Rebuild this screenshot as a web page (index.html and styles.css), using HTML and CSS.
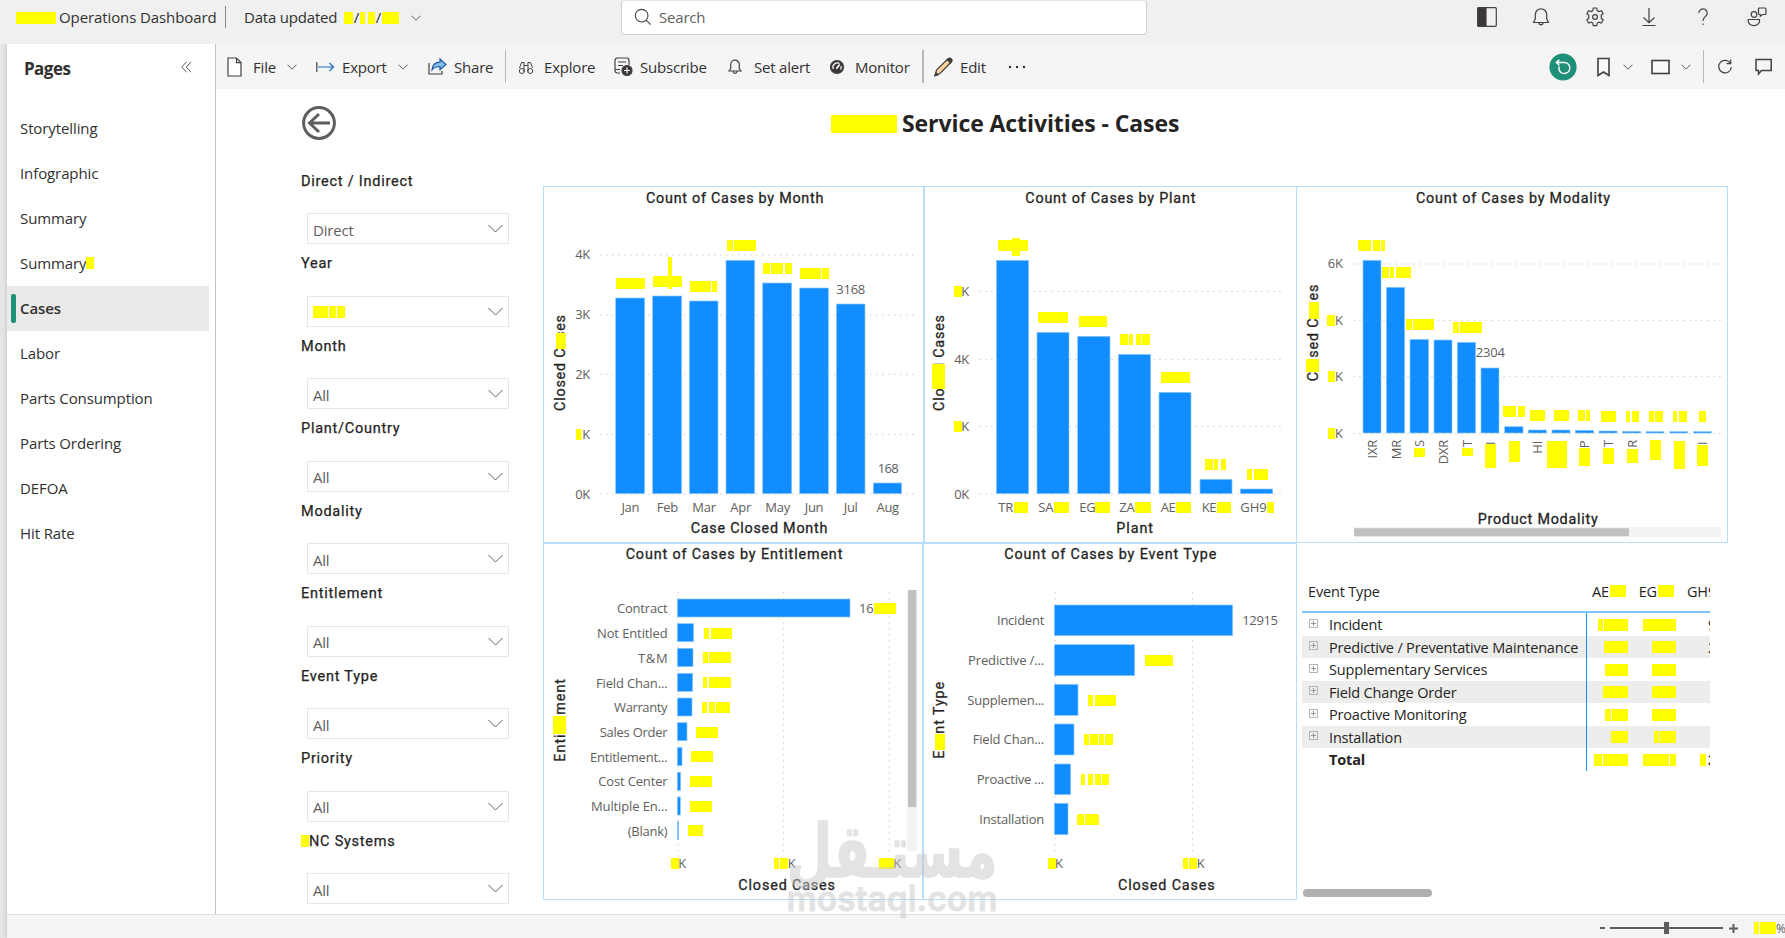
FILE: index.html
```html
<!DOCTYPE html>
<html lang="en">
<head>
    <meta charset="UTF-8">
    <title>Operations Dashboard</title>
    <link rel="stylesheet" href="styles.css">
</head>
<body>
    <header class="topbar">
        <div class="brand"><i class="mark m40"></i><span>Operations Dashboard</span></div>
        <div class="updated">
            <span class="updated-text">Data updated</span>
            <i class="mark m9"></i><span class="slash">/</span><i class="mark m5"></i><i class="mark m7"></i><span class="slash">/</span><i class="mark m17"></i>
            <svg class="chev" viewBox="0 0 10 6"><path d="M.5.7 5 5.2 9.5.7"/></svg>
        </div>
        <div class="search">
            <svg class="icon" viewBox="0 0 20 20"><circle cx="8.5" cy="8.5" r="7"/><path d="M13.5 13.5 18.5 18.5"/></svg>
            <span>Search</span>
        </div>
        <div class="top-icons">
            <svg class="icon" viewBox="0 0 20 20"><rect x=".7" y=".7" width="18.6" height="18.6" rx="1"/><path class="solid" d="M1 1h8v18H1z"/></svg>
            <svg class="icon" viewBox="0 0 20 20"><path d="M2.500 15.500h15L15.700 12V7.500a5.700 5.700 0 0 0-11.400 0V12zM8 15.800a2 2 0 0 0 4 0"/></svg>
            <svg class="icon" viewBox="0 0 20 20"><circle cx="10" cy="10" r="2.400"/><path d="M8.300 1h3.400l.5 2.600 1.700 1 2.500-.9 1.800 3-2 1.700v2.900l2 1.700-1.800 3-2.500-.9-1.700 1-.5 2.600H8.300l-.5-2.600-1.700-1-2.500.9-1.800-3 2-1.700V8.400l-2-1.700 1.800-3 2.500.9 1.700-1z"/></svg>
            <svg class="icon" viewBox="0 0 20 20"><path d="M10 1v14.500M4.500 10.500 10 15.700l5.500-5.200M3.500 18.500h13"/></svg>
            <svg class="icon" viewBox="0 0 20 20"><path d="M5.800 6a4.200 4.200 0 1 1 6.600 3.500C10.700 10.700 10 11.600 10 14M10 16.500v1.500"/></svg>
            <svg class="icon" viewBox="0 0 20 20"><circle cx="7" cy="7.500" r="2.800"/><path d="M1.200 12.500h11.300v1.500a5.600 4.500 0 0 1-11.300 0zM11.500 1h6.500q1 0 1 1v4.500q0 1-1 1h-2.500l-2.200 1.800V7.500h-.8q-1 0-1-1V2q0-1 1-1z"/></svg>
        </div>
    </header>

    <div class="shell">
        <aside class="pages">
            <div class="pages-head"><h2>Pages</h2><svg class="collapse" viewBox="0 0 11 12"><path d="M5.500.8.800 6l4.700 5.200M10 .8 5.300 6l4.700 5.200"/></svg></div>
            <ul>
                <li>Storytelling</li>
                <li>Infographic</li>
                <li>Summary</li>
                <li>Summary<i class="mark m8"></i></li>
                <li class="active"><span>Cases</span></li>
                <li>Labor</li>
                <li>Parts Consumption</li>
                <li>Parts Ordering</li>
                <li>DEFOA</li>
                <li>Hit Rate</li>
            </ul>
        </aside>

        <div class="content">
            <nav class="toolbar">
                <div class="tool"><svg class="icon" viewBox="0 0 20 20"><path fill="#fff" d="M1 1h8.500L14 5.600V19H1zM9.500 1v4.600H14"/></svg><span>File</span><svg class="chev" viewBox="0 0 10 6"><path d="M.5.7 5 5.200 9.500.7"/></svg></div>
                <div class="tool"><svg class="icon" viewBox="0 0 20 20"><path d="M.8 5v10"/><path class="blue" d="M2 10h15.500M13.500 6l4 4-4 4"/></svg><span>Export</span><svg class="chev" viewBox="0 0 10 6"><path d="M.5.7 5 5.200 9.500.7"/></svg></div>
                <div class="tool"><svg class="icon" viewBox="0 0 20 20"><path d="M1 6v11h13v-3"/><path fill="#83beec" stroke="#1e5a9c" d="M4 13C4.300 8 7 5.300 12 5.200V2l6 5.500-6 5.200V9.500C8.500 9.500 6 10.500 4 13z"/></svg><span>Share</span></div>
                <i class="rule"></i>
                <div class="tool"><svg class="icon thin" viewBox="0 0 20 20"><path d="M1.500 11 3.500 5.500h2.500V15M14.500 11 12.500 5.500H10V15M6 8.500h4"/><circle cx="3.800" cy="14" r="2.500"/><circle cx="12.200" cy="14" r="2.500"/></svg><span>Explore</span></div>
                <div class="tool"><svg class="icon" viewBox="0 0 20 20"><path d="M6 16H3.500Q1 16 1 13.500V3.500Q1 1 3.500 1h9Q15 1 15 3.500V8M4 5h8M4 8.500h5M1 12.500h5"/><circle class="solid" cx="13" cy="13.500" r="5"/><path stroke="#fff" d="M13 10.500v6M10 13.500h6"/></svg><span>Subscribe</span></div>
                <div class="tool"><svg class="icon" viewBox="0 0 20 20"><path d="M1 14h12l-1.700-2.500V7.500a4.300 4.300 0 0 0-8.600 0v4zM5.200 14.500a1.800 1.800 0 0 0 3.600 0"/></svg><span>Set alert</span></div>
                <div class="tool"><svg class="icon" viewBox="0 0 20 20"><circle class="solid" cx="8" cy="10" r="6.500"/><path stroke="#fff" d="M4.300 12A4.300 4.300 0 0 1 10.500 6.600M12 9a4.300 4.300 0 0 1-.5 3.500"/><path stroke="#fff" stroke-width="1.800" d="M7.300 11.700 10.700 7.500"/></svg><span>Monitor</span></div>
                <i class="rule thick"></i>
                <div class="tool"><svg class="icon" viewBox="0 0 20 20"><path fill="#ffd59b" d="M1 18.500 2.500 13 14 1.800q1.500-1 3 .2 1.300 1.500.2 3L6 16.500z"/><path class="solid" d="m13.200 2.600 3.300 3.400L18 4q.3-2-2-2.800-1.200-.2-2 .8zM1 18.800l1-3 2.200 2z"/></svg><span>Edit</span></div>
                <svg class="icon" viewBox="0 0 20 20"><g class="dots"><circle cx="2" cy="10" r="1.200"/><circle cx="9" cy="10" r="1.200"/><circle cx="16" cy="10" r="1.200"/></g></svg>
                <i></i>
                <svg class="reset" viewBox="0 0 28 28"><circle cx="14" cy="14" r="13.600"/><path d="M7.500 9.500h8a5.500 5.500 0 1 1-5.300 7.500q-.5-1.500 0-3.500M10.300 6.700l-2.900 2.800 2.900 2.900"/></svg>
                <svg class="icon" viewBox="0 0 20 20"><path stroke-width="1.600" fill="#fafafa" d="M2 1.500h11v17L7.500 15 2 18.500z"/></svg>
                <svg class="chev" viewBox="0 0 10 6"><path d="M.5.7 5 5.200 9.500.7"/></svg>
                <svg class="icon" viewBox="0 0 20 20"><rect x="1" y="3.500" width="17" height="13" stroke-width="1.600" fill="#fafafa"/></svg>
                <svg class="chev" viewBox="0 0 10 6"><path d="M.5.7 5 5.200 9.500.7"/></svg>
                <i class="rule"></i>
                <svg class="icon" viewBox="0 0 20 20"><path d="M13.500 6.500A6.300 6.300 0 1 0 14.300 10M13.700 2.500v4.200H9.500"/></svg>
                <svg class="icon" viewBox="0 0 20 20"><path stroke-width="1.500" d="M2 2.500h15.200v11H7.500L4.500 17v-3.500H2z"/></svg>
            </nav>

            <main class="report">
                <section class="filters">
                    <svg class="back" viewBox="0 0 34 34"><circle cx="17" cy="17" r="15.400"/><path d="M28 17H8M17 8l-9.500 9L17 26"/></svg>
                    <div class="filter"><h3>Direct / Indirect</h3><div class="select"><span>Direct</span><svg viewBox="0 0 15 9"><path d="M.5 1l7 7 7-7"/></svg></div></div>
                    <div class="filter"><h3>Year</h3><div class="select"><span class="marks"><i class="mark m15"></i><i class="mark m7"></i><i class="mark m8"></i></span><svg viewBox="0 0 15 9"><path d="M.5 1l7 7 7-7"/></svg></div></div>
                    <div class="filter"><h3>Month</h3><div class="select"><span>All</span><svg viewBox="0 0 15 9"><path d="M.5 1l7 7 7-7"/></svg></div></div>
                    <div class="filter"><h3>Plant/Country</h3><div class="select"><span>All</span><svg viewBox="0 0 15 9"><path d="M.5 1l7 7 7-7"/></svg></div></div>
                    <div class="filter"><h3>Modality</h3><div class="select"><span>All</span><svg viewBox="0 0 15 9"><path d="M.5 1l7 7 7-7"/></svg></div></div>
                    <div class="filter"><h3>Entitlement</h3><div class="select"><span>All</span><svg viewBox="0 0 15 9"><path d="M.5 1l7 7 7-7"/></svg></div></div>
                    <div class="filter"><h3>Event Type</h3><div class="select"><span>All</span><svg viewBox="0 0 15 9"><path d="M.5 1l7 7 7-7"/></svg></div></div>
                    <div class="filter"><h3>Priority</h3><div class="select"><span>All</span><svg viewBox="0 0 15 9"><path d="M.5 1l7 7 7-7"/></svg></div></div>
                    <div class="filter"><h3><i class="mark m8"></i>NC Systems</h3><div class="select"><span>All</span><svg viewBox="0 0 15 9"><path d="M.5 1l7 7 7-7"/></svg></div></div>
                </section>

                <section class="board">
                    <div class="title"><i class="mark"></i><h1>Service Activities - Cases</h1></div>

                    <!-- charts: 3 svg units to 1px -->
                    <div class="charts">
                        <div class="visual month">
                            <svg class="chart" viewBox="12 21 1137 1065">
                                <text class="head" x="584" y="68" textLength="532">Count of Cases by Month</text>
                                <path class="grid" d="M180 225H1132M180 405H1132M180 583H1132M180 763H1132M180 942H1132"/>
                                <g class="val end"><text x="150" y="237">4K</text><text x="150" y="417">3K</text><text x="150" y="597">2K</text><text x="150" y="777">K</text><text x="150" y="957">0K</text></g>
                                <g class="bar">
                                    <rect x="227" y="354" width="87" height="587"/><rect x="338" y="348" width="87" height="593"/>
                                    <rect x="448" y="363" width="86" height="578"/><rect x="558" y="241" width="86" height="700"/>
                                    <rect x="668" y="309" width="87" height="632"/><rect x="779" y="324" width="86" height="617"/>
                                    <rect x="889" y="372" width="86" height="569"/><rect x="1000" y="909" width="85" height="32"/>
                                </g>
                                <g class="val mid"><text x="932" y="343" textLength="86">3168</text><text x="1044" y="880" textLength="62">168</text>
                                    <text x="271" y="997">Jan</text><text x="382" y="997">Feb</text><text x="492" y="997">Mar</text><text x="602" y="997">Apr</text><text x="713" y="997">May</text><text x="822" y="997">Jun</text><text x="932" y="997">Jul</text><text x="1043" y="997">Aug</text></g>
                                <text class="head" x="657" y="1059" textLength="410">Case Closed Month</text>
                                <text class="head" transform="translate(75 549) rotate(-90)" textLength="288">Closed Cases</text>
                                <path class="hide" d="M48 459h29v48h-29zM108 747h16v33h-16zM228 294h87v33h-87zM339 288h45v-57h12v57h30v33h-30v6h-12v-6h-45zM450 303h63v33h-63zM516 303h15v33h-15zM561 180h18v33h-18zM582 180h66v33h-66zM669 249h21v33h-21zM693 249h36v33h-36zM735 249h21v33h-21zM780 264h63v33h-63zM846 264h21v33h-21z"/>
                            </svg>
                        </div>
                        <div class="visual plant">
                            <svg class="chart" viewBox="15 21 1113 1065">
                                <text class="head" x="571" y="68" textLength="510">Count of Cases by Plant</text>
                                <path class="grid" d="M178 334H1095M178 538H1095M178 740H1095M178 942H1095"/>
                                <g class="val end"><text x="147" y="348">K</text><text x="147" y="552">4K</text><text x="147" y="753">K</text><text x="147" y="957">0K</text></g>
                                <g class="bar">
                                    <rect x="229" y="241" width="97" height="700"/><rect x="351" y="457" width="96" height="484"/>
                                    <rect x="473" y="469" width="97" height="472"/><rect x="595" y="523" width="97" height="418"/>
                                    <rect x="717" y="637" width="96" height="304"/><rect x="840" y="898" width="96" height="43"/>
                                    <rect x="961" y="927" width="97" height="14"/>
                                </g>
                                <g class="val"><text x="235" y="997">TR</text><text x="355" y="997">SA</text><text x="478" y="997">EG</text><text x="598" y="997">ZA</text><text x="722" y="997">AE</text><text x="845" y="997">KE</text><text x="961" y="997" textLength="78">GH9</text></g>
                                <text class="head" x="644" y="1059" textLength="110">Plant</text>
                                <text class="head" transform="translate(72 549) rotate(-90)" textLength="288">Closed Cases</text>
                                <path class="hide" d="M36 552h39v75h-39zM102 318h24v33h-24zM102 723h24v33h-24zM234 180h42v-6h24v6h24v33h-24v15h-24v-15h-42zM354 396h90v33h-90zM477 408h84v33h-84zM600 462h24v33h-24zM627 462h12v33h-12zM648 462h16v33h-16zM666 462h24v33h-24zM723 576h87v33h-87zM855 837h24v33h-24zM882 837h12v33h-12zM903 837h15v33h-15zM981 867h15v33h-15zM1002 867h42v33h-42zM282 966h42v33h-42zM402 966h45v33h-45zM525 966h45v33h-45zM645 966h48v33h-48zM768 966h45v33h-45zM891 966h42v33h-42zM1041 966h21v33h-21z"/>
                            </svg>
                        </div>
                        <div class="visual modality">
                            <svg class="chart" viewBox="21 21 1290 1065">
                                <text class="head" x="669" y="68" textLength="582">Count of Cases by Modality</text>
                                <path class="grid" d="M190 252H1293M190 421H1293M190 590H1293M190 760H1293"/>
                                <g class="val end"><text x="158" y="264">6K</text><text x="158" y="435">K</text><text x="158" y="603">K</text><text x="158" y="774">K</text></g>
                                <g class="bar">
                                    <rect x="219" y="241" width="54" height="518"/><rect x="289" y="322" width="55" height="437"/>
                                    <rect x="360" y="478" width="56" height="281"/><rect x="432" y="480" width="54" height="279"/>
                                    <rect x="502" y="487" width="55" height="272"/><rect x="573" y="564" width="54" height="195"/>
                                    <rect x="644" y="740" width="55" height="19"/><rect x="715" y="750" width="54" height="9"/>
                                    <rect x="786" y="750" width="54" height="9"/><rect x="856" y="751" width="55" height="8"/>
                                    <rect x="927" y="753" width="54" height="6"/><rect x="997" y="754" width="55" height="5"/>
                                    <rect x="1068" y="755" width="54" height="4"/><rect x="1139" y="755" width="54" height="4"/>
                                    <rect x="1210" y="755" width="54" height="4"/>
                                </g>
                                <g class="val"><text x="557" y="531" textLength="87">2304</text></g>
                                <g class="val end">
                                    <text transform="translate(262 780) rotate(-90)">IXR</text><text transform="translate(333 780) rotate(-90)">MR</text>
                                    <text transform="translate(403 780) rotate(-90)">S</text><text transform="translate(474 780) rotate(-90)" textLength="73">DXR</text>
                                    <text transform="translate(545 780) rotate(-90)">T</text><text transform="translate(615 785) rotate(-90)">I</text>
                                    <text transform="translate(756 783) rotate(-90)">HI</text><text transform="translate(898 782) rotate(-90)">P</text>
                                    <text transform="translate(969 780) rotate(-90)">T</text><text transform="translate(1041 780) rotate(-90)">R</text>
                                    <text transform="translate(1252 785) rotate(-90)">I</text>
                                </g>
                                <text class="head" x="743" y="1032" textLength="360">Product Modality</text>
                                <text class="head" transform="translate(84 459) rotate(-90)" textLength="290">Closed Cases</text>
                                <path fill="#f3f3f3" d="M192 1041h1101v30H192z"/>
                                <path fill="#c1c1c1" d="M192 1045h825v24H192z"/>
                                <path class="hide" d="M57 366h30v51h-30zM48 537h39v39h-39zM111 405h24v33h-24zM114 573h21v33h-21zM114 744h21v33h-21zM204 180h39v33h-39zM249 180h21v33h-21zM273 180h12v33h-12zM276 261h21v33h-21zM300 261h12v33h-12zM318 261h45v33h-45zM348 417h18v33h-18zM369 417h63v33h-63zM489 426h18v33h-18zM510 426h66v33h-66zM639 678h39v33h-39zM684 678h21v33h-21zM720 690h45v33h-45zM792 690h45v33h-45zM864 690h21v33h-21zM888 690h12v33h-12zM933 693h45v33h-45zM1008 693h12v33h-12zM1026 693h21v33h-21zM1077 693h15v33h-15zM1095 693h24v33h-24zM1149 693h12v33h-12zM1167 693h24v33h-24zM1227 693h21v33h-21zM372 804h33v27h-33zM516 804h33v24h-33zM585 792h33v72h-33zM657 783h33v63h-33zM771 783h60v81h-60zM867 804h33v54h-33zM939 804h33v48h-33zM1011 807h33v42h-33zM1080 780h33v60h-33zM1152 783h33v84h-33zM1221 795h33v63h-33z"/>
                            </svg>
                        </div>
                    </div>

                    <div class="charts">
                        <div class="visual entitlement">
                            <svg class="chart" viewBox="12 27 1134 1065">
                                <text class="head" x="582" y="71" textLength="650">Count of Cases by Entitlement</text>
                                <path class="grid" d="M414 171V951M731 171V951M1048 171V951"/>
                                <g class="bar">
                                    <rect x="412" y="192" width="518" height="54"/><rect x="412" y="266" width="49" height="54"/>
                                    <rect x="412" y="340" width="47" height="55"/><rect x="412" y="415" width="46" height="54"/>
                                    <rect x="412" y="489" width="44" height="54"/><rect x="412" y="563" width="29" height="54"/>
                                    <rect x="412" y="637" width="14" height="55"/><rect x="412" y="712" width="10" height="54"/>
                                    <rect x="412" y="786" width="9" height="54"/><rect x="412" y="860" width="4" height="54"/>
                                </g>
                                <g class="val end">
                                    <text x="382" y="234" textLength="151">Contract</text><text x="382" y="309" textLength="211">Not Entitled</text>
                                    <text x="382" y="384" textLength="88">T&amp;M</text><text x="382" y="459" textLength="214">Field Chan...</text>
                                    <text x="382" y="532" textLength="160">Warranty</text><text x="382" y="607" textLength="203">Sales Order</text>
                                    <text x="382" y="681" textLength="232">Entitlement...</text><text x="382" y="754" textLength="207">Cost Center</text>
                                    <text x="382" y="829" textLength="229">Multiple En...</text><text x="382" y="904" textLength="119">(Blank)</text>
                                    <text x="438" y="999">K</text><text x="766" y="999">K</text><text x="1083" y="999">K</text>
                                    <text x="1000" y="234">16</text>
                                </g>
                                <text class="head" x="740" y="1064" textLength="290">Closed Cases</text>
                                <text class="head" transform="translate(75 556) rotate(-90)" textLength="248">Entitlement</text>
                                <path fill="#f3f3f3" d="M1101 165h30v784h-30z"/>
                                <path fill="#c1c1c1" d="M1104 165h25v651h-25z"/>
                                <path class="hide" d="M39 543h39v54h-39zM1002 204h66v33h-66zM492 279h15v33h-15zM513 279h63v33h-63zM489 351h15v33h-15zM507 351h66v33h-66zM489 426h12v33h-12zM507 426h66v33h-66zM486 501h15v33h-15zM507 501h18v33h-18zM528 501h42v33h-42zM468 576h66v33h-66zM453 648h66v33h-66zM450 723h66v33h-66zM450 798h66v33h-66zM444 870h45v33h-45zM393 969h24v33h-24zM702 969h15v33h-15zM720 969h24v33h-24zM1017 969h45v33h-45z"/>
                            </svg>
                        </div>
                        <div class="visual event">
                            <svg class="chart" viewBox="27 27 1116 1065">
                                <text class="head" x="586" y="71" textLength="636">Count of Cases by Event Type</text>
                                <path class="grid" d="M420 171V951M833 171V951"/>
                                <g class="bar">
                                    <rect x="418" y="210" width="535" height="92"/><rect x="418" y="329" width="241" height="93"/>
                                    <rect x="418" y="448" width="71" height="93"/><rect x="418" y="567" width="59" height="93"/>
                                    <rect x="418" y="687" width="49" height="92"/><rect x="418" y="805" width="41" height="94"/>
                                </g>
                                <g class="val end">
                                    <text x="387" y="270" textLength="141">Incident</text><text x="387" y="390" textLength="228">Predictive /...</text>
                                    <text x="387" y="510" textLength="230">Supplemen...</text><text x="387" y="627" textLength="214">Field Chan...</text>
                                    <text x="387" y="747" textLength="202">Proactive ...</text><text x="387" y="867" textLength="194">Installation</text>
                                    <text x="1088" y="270" textLength="106">12915</text><text x="443" y="999">K</text><text x="868" y="999">K</text>
                                </g>
                                <text class="head" x="754" y="1064" textLength="290">Closed Cases</text>
                                <text class="head" transform="translate(87 556) rotate(-90)" textLength="231">Event Type</text>
                                <path class="hide" d="M60 597h30v48h-30zM690 360h84v33h-84zM519 480h15v33h-15zM540 480h63v33h-63zM507 597h15v33h-15zM525 597h24v33h-24zM552 597h15v33h-15zM570 597h24v33h-24zM498 717h12v33h-12zM519 717h15v33h-15zM540 717h18v33h-18zM561 717h21v33h-21zM486 837h21v33h-21zM510 837h42v33h-42zM399 969h24v33h-24zM804 969h15v33h-15zM822 969h24v33h-24z"/>
                            </svg>
                        </div>
                        <div class="matrix">
                            <div class="row matrix-head"><b></b><span>Event Type</span><span class="cell">AE<i class="mark m16"></i></span><span class="cell">EG<i class="mark m16"></i></span><span class="last">GH9</span></div>
                            <div class="row"><b class="plus"></b><span class="name">Incident</span><span class="cell"><i class="mark m5"></i><i class="mark m24"></i></span><span class="cell"><i class="mark m33"></i></span><span class="last num">9</span></div>
                            <div class="row"><b class="plus"></b><span class="name">Predictive / Preventative Maintenance</span><span class="cell"><i class="mark m24"></i></span><span class="cell"><i class="mark m24"></i></span><span class="last num">2</span></div>
                            <div class="row"><b class="plus"></b><span class="name">Supplementary Services</span><span class="cell"><i class="mark m23"></i></span><span class="cell"><i class="mark m24"></i></span><span class="last"></span></div>
                            <div class="row"><b class="plus"></b><span class="name">Field Change Order</span><span class="cell"><i class="mark m25"></i></span><span class="cell"><i class="mark m24"></i></span><span class="last"></span></div>
                            <div class="row"><b class="plus"></b><span class="name">Proactive Monitoring</span><span class="cell"><i class="mark m6"></i><i class="mark m16"></i></span><span class="cell"><i class="mark m24"></i></span><span class="last"></span></div>
                            <div class="row"><b class="plus"></b><span class="name">Installation</span><span class="cell"><i class="mark m17"></i></span><span class="cell"><i class="mark m5"></i><i class="mark m16"></i></span><span class="last"></span></div>
                            <div class="row total"><b></b><span class="name">Total</span><span class="cell"><i class="mark m8"></i><i class="mark m25"></i></span><span class="cell"><i class="mark m26"></i><i class="mark m6"></i></span><span class="last num"><i class="mark m6"></i>2</span></div>
                            <div class="matrix-scroll"></div>
                        </div>
                    </div>
                </section>
            </main>
        </div>

        <footer class="status">
            <span class="minus"></span>
            <span class="slider"><i></i></span>
            <svg class="zoom-in" viewBox="0 0 9 9"><path d="M4.500 0v9M0 4.500h9"/></svg>
            <span class="percent"><i class="mark m5"></i><i class="mark m16"></i>%</span>
        </footer>
    </div>

    <svg class="watermark" viewBox="0 0 220 110">
        <text class="wm-ar" x="109" y="62" textLength="211" lengthAdjust="spacingAndGlyphs">مستـقل</text>
        <text class="wm-en" x="109" y="96" textLength="211" lengthAdjust="spacingAndGlyphs">mostaql.com</text>
    </svg>
</body>
</html>
```

FILE: styles.css
```css
* {
    box-sizing: border-box;
}
body {
    margin: 0;
    width: 1785px;
    height: 938px;
    overflow: hidden;
    background: #e6e6e6;
    font-family: "Open Sans", "Noto Sans", sans-serif;
    font-size: 15px;
    letter-spacing: -0.2px;
    color: #323130;
    display: flex;
    flex-direction: column;
}
h1, h2, h3, ul {
    margin: 0;
    padding: 0;
}
ul {
    list-style: none;
}
svg {
    display: block;
    flex: none;
}
.icon {
    width: 20px;
    height: 20px;
    fill: none;
    stroke: #45403f;
    stroke-width: 1.2;
}
.thin {
    stroke-width: 1;
}
.solid {
    fill: #3b3637;
}
.blue {
    stroke: #1b6ec2;
}
.dots {
    fill: #323130;
    stroke: none;
}
.chev {
    width: 10px;
    height: 6px;
    fill: none;
    stroke: #605e5c;
}

/* redacted values */
.mark {
    display: block;
    flex: none;
    height: 12px;
    background: #ffff00;
}
.m5 { width: 5px; }
.m6 { width: 6px; }
.m7 { width: 7px; }
.m8 { width: 8px; }
.m9 { width: 9px; }
.m15 { width: 15px; }
.m16 { width: 16px; }
.m17 { width: 17px; }
.m23 { width: 23px; }
.m24 { width: 24px; }
.m25 { width: 25px; }
.m26 { width: 26px; }
.m33 { width: 33px; }
.m40 { width: 40px; }

/* Top bar */
.topbar {
    height: 44px;
    flex: none;
    background: #f0f0f0;
    display: grid;
    grid-template-columns: 226px 395px 526px 1fr;
    align-items: start;
}
.brand, .updated {
    display: flex;
    align-items: center;
    height: 22px;
    margin-top: 6px;
}
.brand {
    padding-left: 16px;
    gap: 3px;
    border-right: 1px solid #8a8886;
    letter-spacing: -0.1px;
}
.brand .mark, .updated .mark {
    margin-top: 2px;
}
.updated {
    padding-left: 18px;
}
.updated-text {
    width: 100px;
}
.slash {
    width: 7px;
    text-align: center;
}
.updated .m7 {
    margin-left: 3px;
}
.updated .chev {
    margin-left: 12px;
    margin-top: 2px;
}
.search {
    height: 35px;
    background: #fff;
    border: 1px solid #d1d1d1;
    border-top-color: #e6e6e6;
    border-radius: 4px;
    display: flex;
    align-items: center;
    padding: 0 0 2px 12px;
    gap: 7px;
    color: #616161;
}
.search .icon {
    width: 18px;
    height: 18px;
}
.top-icons {
    display: flex;
    gap: 34px;
    padding: 7px 0 0 330px;
}

/* Shell */
.shell {
    margin-left: 7px;
    height: 894px;
    display: grid;
    grid-template-columns: 209px 1fr;
    grid-template-rows: 870px 24px;
    box-shadow: 0 0 5px #bbb;
    clip-path: inset(0 0 0 -7px);
}
.pages {
    background: #fff;
    border-right: 1px solid #c4c4c4;
}
.pages-head {
    display: flex;
    align-items: center;
    justify-content: space-between;
    height: 48px;
    padding: 0 23px 0 17px;
    margin-bottom: 14px;
}
.pages-head h2 {
    font-size: 17px;
    font-weight: 700;
    letter-spacing: -0.55px;
}
.collapse {
    width: 11px;
    height: 12px;
    margin-top: -2px;
    fill: none;
    stroke: #605e5c;
}
.pages li {
    height: 45px;
    width: 202px;
    padding: 0 0 2px 13px;
    display: flex;
    align-items: center;
    letter-spacing: -0.1px;
}
.pages li.active {
    background: #eaeaea;
    font-weight: 600;
    padding: 0 0 0 4px;
}
.pages li.active span {
    margin-top: -2px;
}
.pages li.active::before {
    content: "";
    width: 5px;
    height: 29px;
    margin-right: 4px;
    border-radius: 2px;
    background: #1f8f78;
}
.content {
    background: #fff;
    min-width: 0;
}

/* Toolbar */
.toolbar {
    height: 45px;
    background: #f5f5f5;
    padding-left: 11px;
    display: grid;
    grid-template-columns: 89px 112px 77px 13px 96px 114px 101px 93px 12px 74px 20px 1fr 47px 27px 28px 30px 22px 14px 37px 31px;
    align-items: center;
}
.tool {
    display: flex;
    align-items: center;
}
.tool .icon {
    margin-right: 6px;
}
.tool .chev {
    margin-left: 11px;
}
.rule {
    width: 1px;
    height: 33px;
    background: #b8b8b8;
}
.rule.thick {
    width: 2px;
}
.reset {
    width: 28px;
    height: 28px;
    fill: #1f8f78;
}
.reset path {
    fill: none;
    stroke: #fff;
    stroke-width: 1.5;
}

/* Report canvas */
.report {
    display: grid;
    grid-template-columns: 242px 1187px;
    padding-left: 85px;
}
.back {
    width: 34px;
    height: 34px;
    margin: 17px 0 28px 1px;
    fill: none;
    stroke: #605e5c;
    stroke-width: 3;
}
.filter {
    height: 82.5px;
}
.filter h3 {
    display: flex;
    align-items: center;
    height: 25px;
    margin-bottom: 20px;
    padding-top: 1px;
    font: 400 14.5px Roboto, sans-serif;
    letter-spacing: 0.75px;
    color: #252423;
    -webkit-text-stroke: 0.25px #252423;
}
.select {
    width: 202px;
    height: 31px;
    margin-left: 6px;
    padding: 2px 5px 0;
    border: 1px solid #e6e6e6;
    display: flex;
    align-items: center;
    justify-content: space-between;
    color: #605e5c;
}
.select svg {
    width: 15px;
    height: 9px;
    margin-top: -2px;
    fill: none;
    stroke: #605e5c;
}
.marks {
    display: flex;
    gap: 1px;
}
.title {
    height: 97px;
    padding: 16px 0 0 288px;
    display: flex;
    gap: 5px;
}
.title .mark {
    width: 66px;
    height: 18px;
    margin-top: 10px;
}
.title h1 {
    font-size: 23px;
    line-height: 37px;
    font-weight: 700;
    letter-spacing: -0.08px;
    color: #252423;
}
.charts {
    display: flex;
    height: 357px;
}
.visual {
    flex: none;
    border: 1px solid #b9defb;
}
.month { width: 381px; }
.plant { width: 373px; }
.modality {
    width: 431px;
    border-left: 0;
}
.entitlement { width: 380px; }
.event { width: 374px; }

/* Charts */
.chart {
    width: 100%;
    height: 100%;
    letter-spacing: 0;
}
.head {
    font-family: Roboto, sans-serif;
    font-weight: 400;
    font-size: 43px;
    fill: #252423;
    stroke: #252423;
    stroke-width: 0.9;
    text-anchor: middle;
}
.val {
    font-size: 39px;
    letter-spacing: -0.8px;
    fill: #605e5c;
}
.mid {
    text-anchor: middle;
}
.end {
    text-anchor: end;
}
.grid {
    stroke: #c8c6c4;
    stroke-width: 3;
    stroke-dasharray: 4 14;
}
.bar {
    fill: #118dff;
    stroke: #8cc8ff;
    stroke-width: 2;
}
.hide {
    fill: #ffff00;
}

/* Event type matrix */
.matrix {
    width: 408px;
    margin: 26px 0 0 5px;
    overflow: hidden;
    color: #252423;
    font-size: 14.5px;
    letter-spacing: -0.17px;
}
.row {
    display: grid;
    grid-template-columns: 27px 258px 41px 48px 34px;
    height: 22.5px;
    align-items: center;
    white-space: nowrap;
}
.row:nth-child(odd) {
    background: #ededec;
}
.row.matrix-head {
    height: 44px;
    padding-top: 2px;
    background: none;
    border-bottom: 2px solid #7cc4fb;
    grid-template-columns: 6px 279px 41px 48px 34px;
}
.name {
    height: 100%;
    line-height: 23px;
    border-right: 1px solid #118dff;
}
.cell {
    display: flex;
    align-items: center;
    justify-content: flex-end;
    gap: 1px;
}
.matrix-head .cell {
    margin-right: 2px;
}
.last {
    padding-left: 11px;
    overflow: hidden;
}
.num {
    padding-left: 32px;
}
.total .num {
    display: flex;
    align-items: center;
    gap: 2px;
    padding-left: 24px;
}
.row.total {
    font-weight: 700;
    background: none;
}
.plus {
    width: 9px;
    height: 9px;
    margin: -3px 0 0 7px;
    border: 1px solid #b5b5b5;
    background: linear-gradient(#999, #999) center / 5px 1px no-repeat, linear-gradient(#999, #999) center / 1px 5px no-repeat;
}
.matrix-scroll {
    width: 129px;
    height: 8px;
    margin: 118px 0 0 1px;
    border-radius: 4px;
    background: #b0b0b0;
}

/* Status bar */
.status {
    grid-column: 1 / 3;
    background: #f4f4f4;
    border-top: 1px solid #e1dfdd;
    display: flex;
    align-items: center;
    padding: 3px 0 0 1593px;
    overflow: hidden;
}
.minus {
    width: 5px;
    height: 2px;
    background: #605e5c;
    flex: none;
}
.slider {
    width: 113px;
    height: 2px;
    margin: 0 6px 0 5px;
    background: #605e5c;
    flex: none;
    display: flex;
    align-items: center;
    justify-content: center;
}
.slider i {
    width: 5px;
    height: 12px;
    flex: none;
    background: #605e5c;
}
.zoom-in {
    width: 9px;
    height: 9px;
    stroke: #605e5c;
    stroke-width: 2;
}
.percent {
    display: flex;
    align-items: center;
    margin-left: 16px;
    font-size: 12px;
    color: #605e5c;
}
.percent .m16 {
    margin-left: 1px;
}

.watermark {
    position: absolute;
    left: 783px;
    top: 815px;
    width: 220px;
    height: 110px;
    fill: #c8c8c8;
    stroke: #c8c8c8;
    stroke-width: 1.5;
    stroke-linejoin: round;
    opacity: 0.5;
    text-anchor: middle;
    letter-spacing: 0;
}
.wm-ar {
    font: 700 74px "DejaVu Sans", sans-serif;
}
.wm-en {
    font: 600 35px Inter, sans-serif;
    stroke-width: 0.8;
}
```
